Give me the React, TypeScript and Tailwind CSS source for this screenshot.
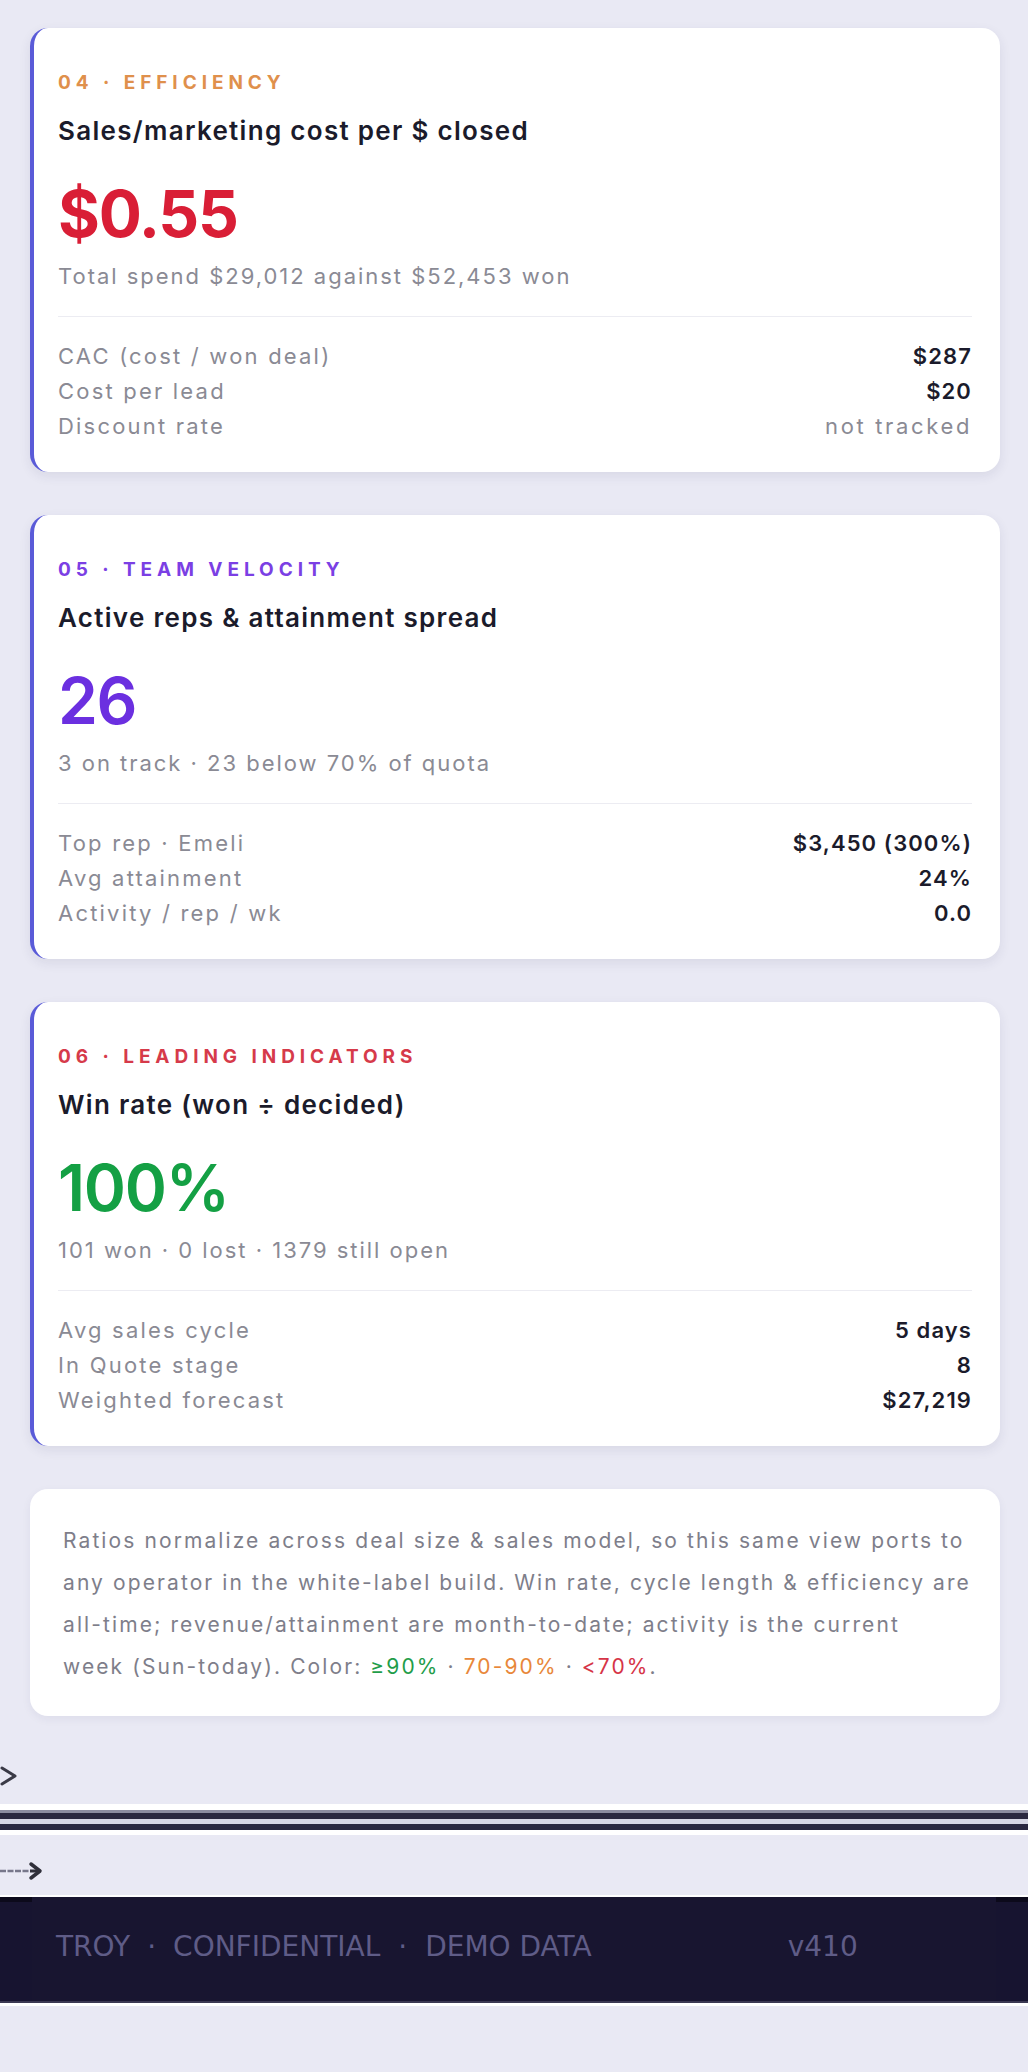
import React from 'react';

interface Row {
  label: string;
  value: string;
}

interface MetricCardProps {
  tag: string;
  tagColor: string;
  title: string;
  value: string;
  valueColor: string;
  valueWeight: string;
  sub: string;
  rows: Row[];
}

function MetricCard({ tag, tagColor, title, value, valueColor, valueWeight, sub, rows }: MetricCardProps) {
  return (
    <div className="bg-white rounded-[18px] border-l-[4px] border-[#5a5bd8] shadow-[0_4px_12px_rgba(40,40,90,0.09)] pl-[24px] pr-[28px] pt-[43px] pb-[28px]">
      <div className={`text-[19px] leading-[24px] font-bold tracking-[0.26em] ${tagColor}`}>{tag}</div>
      <div className="mt-[21px] text-[26px] leading-[30px] font-semibold text-[#1b1b2b] tracking-[0.05em]">{title}</div>
      <div className={`mt-[32px] text-[64px] leading-[72px] tracking-[-0.02em] ${valueWeight} ${valueColor}`}>{value}</div>
      <div className="mt-[12px] text-[22px] leading-[28px] tracking-[0.09em] text-[#8a8a94]">{sub}</div>
      <div className="mt-[26px] h-px bg-[#ececf2]" />
      <div className="mt-[22px] flex flex-col">
        {rows.map((r) => (
          <div key={r.label} className="flex items-center justify-between text-[22px] leading-[35px]">
            <span className="text-[#8a8a94] tracking-[0.1em]">{r.label}</span>
            <span
              className={
                r.value === 'not tracked'
                  ? 'text-[#8a8a94] tracking-[0.12em]'
                  : 'font-semibold text-[#1b1b2b] tracking-[0.05em]'
              }
            >
              {r.value}
            </span>
          </div>
        ))}
      </div>
    </div>
  );
}

const cards: MetricCardProps[] = [
  {
    tag: '04 · EFFICIENCY',
    tagColor: 'text-[#df904c]',
    title: 'Sales/marketing cost per $ closed',
    value: '$0.55',
    valueColor: 'text-[#d91e36]',
    valueWeight: 'font-bold',
    sub: 'Total spend $29,012 against $52,453 won',
    rows: [
      { label: 'CAC (cost / won deal)', value: '$287' },
      { label: 'Cost per lead', value: '$20' },
      { label: 'Discount rate', value: 'not tracked' },
    ],
  },
  {
    tag: '05 · TEAM VELOCITY',
    tagColor: 'text-[#7b3fe4]',
    title: 'Active reps & attainment spread',
    value: '26',
    valueColor: 'text-[#6b2fe0]',
    valueWeight: 'font-semibold',
    sub: '3 on track · 23 below 70% of quota',
    rows: [
      { label: 'Top rep · Emeli', value: '$3,450 (300%)' },
      { label: 'Avg attainment', value: '24%' },
      { label: 'Activity / rep / wk', value: '0.0' },
    ],
  },
  {
    tag: '06 · LEADING INDICATORS',
    tagColor: 'text-[#d63a4a]',
    title: 'Win rate (won ÷ decided)',
    value: '100%',
    valueColor: 'text-[#14a044]',
    valueWeight: 'font-semibold',
    sub: '101 won · 0 lost · 1379 still open',
    rows: [
      { label: 'Avg sales cycle', value: '5 days' },
      { label: 'In Quote stage', value: '8' },
      { label: 'Weighted forecast', value: '$27,219' },
    ],
  },
];

export default function App() {
  return (
    <div className="min-h-[2072px] bg-[#e9e9f4] font-['Inter',sans-serif] overflow-hidden">
      <div className="pl-[30px] pt-[28px] pr-[28px] flex flex-col gap-[43px]">
        {cards.map((c) => (
          <MetricCard key={c.tag} {...c} />
        ))}

        <div className="bg-white rounded-[18px] shadow-[0_3px_10px_rgba(40,40,90,0.06)] pl-[33px] pr-[20px] pt-[31px] pb-[28px] text-[21px] leading-[42px] tracking-[0.1em] text-[#7e7e8a] whitespace-nowrap">
          <div>Ratios normalize across deal size &amp; sales model, so this same view ports to</div>
          <div>any operator in the white-label build. Win rate, cycle length &amp; efficiency are</div>
          <div>all-time; revenue/attainment are month-to-date; activity is the current</div>
          <div>
            week (Sun-today). Color: <span className="text-[#1f9d4a]">≥90%</span> ·{' '}
            <span className="text-[#e8873a]">70-90%</span> · <span className="text-[#d63447]">&lt;70%</span>.
          </div>
        </div>
      </div>

      {/* stray chevron */}
      <div className="pt-[49px] h-[88px]">
        <svg width="18" height="22" viewBox="0 0 18 22" className="block">
          <path d="M2 3 L15 11 L2 19" fill="none" stroke="#3a3a46" strokeWidth="3" strokeLinecap="round" strokeLinejoin="round" />
        </svg>
      </div>

      {/* double rule */}
      <div className="flex flex-col">
        <div className="h-[6px] bg-white" />
        <div className="h-[3px] bg-[#8c8ca0]" />
        <div className="h-[6px] bg-[#2a2840]" />
        <div className="h-[5px] bg-[#d6d6e4]" />
        <div className="h-[6px] bg-[#2a2840]" />
        <div className="h-[5px] bg-white" />
      </div>

      {/* stray arrow */}
      <div className="pt-[26px] h-[60px]">
        <svg width="44" height="20" viewBox="0 0 44 20" className="block">
          <path d="M0 10 H30" fill="none" stroke="#77778a" strokeWidth="2.5" strokeDasharray="6 1.5" />
          <path d="M30 10 H38" fill="none" stroke="#2f2f3a" strokeWidth="3" />
          <path d="M31 3 L40 10 L31 17" fill="none" stroke="#2f2f3a" strokeWidth="3.5" strokeLinecap="round" strokeLinejoin="round" />
        </svg>
      </div>

      {/* footer */}
      <div className="h-[2px] bg-white" />
      <div className="bg-[#171430] border-t-[5px] border-[#0c0a1b]">
        <div className="mx-[32px] -mt-[5px] bg-[#181530] h-[104px] pt-[35px] pl-[24px] flex items-start font-['DejaVu_Sans',sans-serif] text-[28px] leading-[30px] text-[#5f5c87]">
          <span>TROY</span>
          <span className="mx-[17px]">·</span>
          <span>CONFIDENTIAL</span>
          <span className="mx-[18px]">·</span>
          <span>DEMO DATA</span>
          <span className="ml-[196px]">v410</span>
        </div>
        <div className="h-[2px] bg-[#3a3852]" />
      </div>
      <div className="h-[3px] bg-white" />
    </div>
  );
}
